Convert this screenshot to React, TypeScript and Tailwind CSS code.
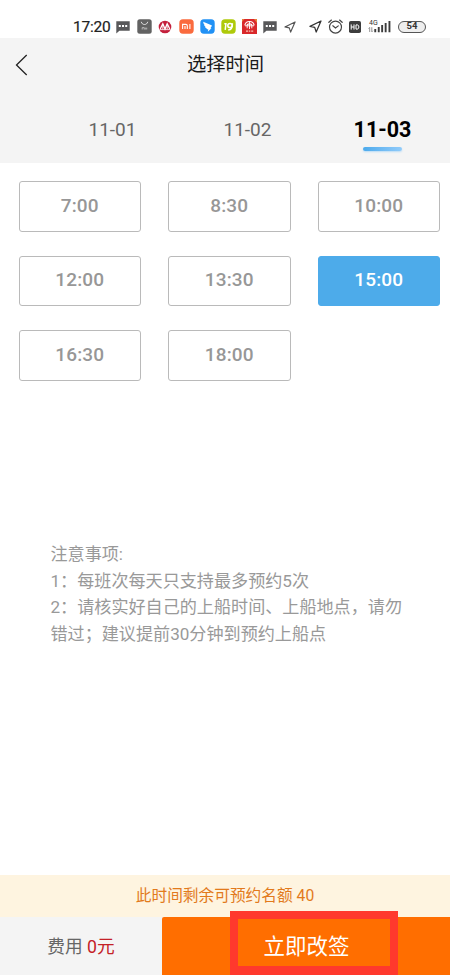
import clsx from "clsx";

const dates = ["11-01", "11-02", "11-03"];
const activeDate = "11-03";

const slots = ["7:00", "8:30", "10:00", "12:00", "13:30", "15:00", "16:30", "18:00"];
const activeSlot = "15:00";

const ChatIcon = () => (
    <svg className="w-[14px] h-[14px]" viewBox="0 0 14 14">
        <path d="M0.3 1.2h13.4v9.6H3.4L0.3 13.400z" fill="#58585a" />
        <path d="M2.800 5h2v2h-2zM6 5h2v2H6zM9.200 5h2v2h-2z" fill="#fff" />
    </svg>
);

const BagIcon = () => (
    <svg className="w-[15px] h-[15px]" viewBox="0 0 15 15">
        <rect x="0.3" y="0.3" width="14.4" height="14.4" rx="2.5" fill="#626262" />
        <path d="M4.300 2.800c.6 3.600 5.800 3.600 6.400 0" fill="none" stroke="#e5e5e5" strokeWidth="1" />
        <path d="M5.200 10.500V8.600h2v1.900M8.300 8.600v1.900M9.700 8.600v1.900" fill="none" stroke="#ccc" strokeWidth="0.8" />
    </svg>
);

const BankIcon = () => (
    <svg className="w-[14px] h-[14px]" viewBox="0 0 14 14">
        <circle cx="7" cy="7" r="6.3" fill="#c4203c" />
        <path d="M2.200 9 4.800 3.800 7 9l2.200-5.200L11.800 9" fill="none" stroke="#fff" strokeWidth="1.3" />
        <path d="M4.800 4v5M9.200 4v5M1.500 9.600h11" fill="none" stroke="#fff" strokeWidth="0.8" />
    </svg>
);

const MiIcon = () => (
    <svg className="w-[15px] h-[15px]" viewBox="0 0 15 15">
        <rect x="0.3" y="0.3" width="14.4" height="14.4" rx="3.6" fill="#fa6b3e" />
        <path d="M3.600 9.900V5.400h3.200c1 0 1.500.5 1.500 1.400v3.100M6 7v2.900M10.900 4.900v5" fill="none" stroke="#fff" strokeWidth="1.100" />
    </svg>
);

const WingIcon = () => (
    <svg className="w-[15px] h-[15px]" viewBox="0 0 15 15">
        <rect x="0.3" y="0.3" width="14.4" height="14.4" rx="3.6" fill="#2191f5" />
        <path d="M3.200 2.800 11.500 6.200c.4.2.5.5.3.9L10.400 9.200h1.100L7.800 12.800l.5-2.600H7.100L6.400 9.300 5.200 8.700l.4-.7-1.500-1.400.5-.6C3.700 5 3.300 4 3.200 2.800z" fill="#fff" />
    </svg>
);

const IqiyiIcon = () => (
    <svg className="w-[15px] h-[15px]" viewBox="0 0 15 15">
        <rect x="0.3" y="0.3" width="14.4" height="14.4" rx="3.6" fill="#afca0b" />
        <path d="M3.300 4.800h1.600L4.200 10.800" fill="none" stroke="#fff" strokeWidth="1.500" />
        <ellipse cx="9" cy="6.500" rx="2.200" ry="2.100" fill="none" stroke="#fff" strokeWidth="1.500" />
        <path d="M11.400 4.200c.2 4-1.200 6.500-4.200 6.700" fill="none" stroke="#fff" strokeWidth="1.500" />
    </svg>
);

const RedAppIcon = () => (
    <svg className="w-[15px] h-[15px]" viewBox="0 0 15 15">
        <path d="M0 0h15v15H0z" fill="#d9282b" />
        <path d="M12 0h3v4zM0 0h2.500L0 3z" fill="#e8803a" />
        <path d="M2.800 6.300C3.400 3.600 5 2.500 7.500 2.500s4.100 1.100 4.700 3.800M5 6.200c.5-1.700 4.500-1.700 5 0" fill="none" stroke="#fff" strokeWidth="1.200" />
        <path d="M7.500 3v7M5.200 6v3.300M9.800 6v3.300M3 6.800h9" stroke="#fff" strokeWidth="0.900" />
        <path d="M4 12.200h2M6.800 12.200h1.500M9.200 12.200h2" stroke="#f8c5b5" strokeWidth="1.300" />
    </svg>
);

const ArrowIcon = ({ className }: { className: string }) => (
    <svg className={className} viewBox="0 0 13 13">
        <path d="M12 1 1 6.400l4.700 1 1.500 4.600z" fill="none" stroke="currentColor" strokeWidth="1.250" strokeLinejoin="round" />
    </svg>
);

const AlarmIcon = () => (
    <svg className="w-[15px] h-[15px]" viewBox="0 0 14 14" fill="none" stroke="#444" strokeLinecap="round">
        <circle cx="7" cy="7.500" r="5.600" strokeWidth="1.100" />
        <path d="M.8 3 3.200 1M13.200 3 10.800 1" strokeWidth="1.200" />
        <path d="M4.500 6.300 7 8.400l2.600-2" strokeWidth="1.100" />
    </svg>
);

const HdIcon = () => (
    <svg className="w-[12px] h-[12px]" viewBox="0 0 12 12">
        <rect width="12" height="12" rx="1.800" fill="#3c3c3c" />
        <path d="M2.200 3.400v5.200M5 3.400v5.200M2.200 6H5M7 3.900v4.200h1c1.300 0 1.800-.7 1.800-2.100S9.300 3.900 8 3.900z" fill="none" stroke="#fff" strokeWidth="1" />
    </svg>
);

const SignalIcon = () => (
    <svg className="w-[24px] h-[16px]" viewBox="0 0 24 16">
        <text x="1" y="6" fontSize="7" fontFamily="Roboto, sans-serif" fill="#333">4G</text>
        <path d="M1.700 13V8.500M.6 9.600l1.100-1.200M3.800 8.200v4.600M4.900 11.700l-1.100 1.200" stroke="#777" strokeWidth="0.800" fill="none" />
        <path d="M6.300 10h1.900v3.300H6.300zM9.800 8h1.900v5.300H9.800zM13.200 6h1.900v7.300h-1.900zM16.700 4h1.900v9.300h-1.900zM20.500 2h1.900v11.300h-1.900z" fill="#3c3c3c" />
    </svg>
);

const StatusBar = () => (
    <div className="flex h-[38px] bg-white pl-[73px] pt-[18px] text-[#555]">
        <span className="w-[43px] text-[15.500px] leading-[18px] tracking-[-0.200px] text-[#222] [-webkit-text-stroke:0.200px_#222]">17:20</span>
        <div className="flex h-[17px] shrink-0 items-center">
            <ChatIcon />
            <div className="ml-[7px]"><BagIcon /></div>
            <div className="ml-[6px]"><BankIcon /></div>
            <div className="ml-[7px]"><MiIcon /></div>
            <div className="ml-[6px]"><WingIcon /></div>
            <div className="ml-[6px]"><IqiyiIcon /></div>
            <div className="ml-[6px]"><RedAppIcon /></div>
            <div className="ml-[6px]"><ChatIcon /></div>
            <ArrowIcon className="ml-[7px] h-[12px] w-[12px]" />
            <ArrowIcon className="ml-[13px] h-[13px] w-[13px] text-[#333]" />
            <div className="ml-[6px]"><AlarmIcon /></div>
            <div className="ml-[6px]"><HdIcon /></div>
            <div className="ml-[7px]"><SignalIcon /></div>
            <div className="ml-[6px] flex h-[12px] w-[28px] items-center justify-center rounded-full border border-[#555] bg-[#eee] text-[9.500px] font-bold text-[#333]">
                54
            </div>
        </div>
    </div>
);

export default function App() {
    return (
        <div className="flex h-[975px] w-[450px] flex-col overflow-hidden bg-white font-['Roboto','Noto_Sans_CJK_SC',sans-serif]">
            <StatusBar />

            <header className="h-[125px] bg-[#f4f4f4]">
                <div className="grid h-[52px] grid-cols-[60px_1fr_60px] items-center">
                    <svg className="ml-[15px] mt-[2px] h-[22px] w-[13px]" viewBox="0 0 13 22" fill="none" stroke="#222" strokeWidth="1.300">
                        <path d="M11.700 1 1.500 11l10.200 10" />
                    </svg>
                    <h1 className="pl-[1px] pt-[2px] text-center text-[19.300px] leading-6 text-[#1a1a1a]">选择时间</h1>
                </div>
                <nav className="grid grid-cols-3 pl-[45px]">
                    {dates.map((date) => (
                        <div key={date} className="flex flex-col items-center pt-[26px]">
                            <span
                                className={clsx(
                                    "h-[28px] leading-[27px]",
                                    date === activeDate ? "text-[21.500px] font-bold text-black" : "text-[19px] text-[#666]"
                                )}
                            >
                                {date}
                            </span>
                            {date === activeDate && (
                                <span className="mt-[3px] h-[3.500px] w-[39px] rounded-sm bg-linear-to-r from-[#4baaec] to-[#90cbfa] shadow-[0_1px_2px_#b9dcf6]" />
                            )}
                        </div>
                    ))}
                </nav>
            </header>

            <main className="flex-1">
                <div className="grid grid-cols-[repeat(3,122.500px)] gap-x-[27px] gap-y-[24px] pl-[18.500px] pt-[18px]">
                    {slots.map((slot) => (
                        <button
                            key={slot}
                            className={clsx(
                                "h-[50.700px] rounded-[3px] border pb-[1px] text-[19px] font-medium tracking-[0.150px]",
                                slot === activeSlot
                                    ? "border-[#4dabea] bg-[#4dabea] text-white"
                                    : "border-[#bababa] bg-white text-[#979797]"
                            )}
                        >
                            {slot}
                        </button>
                    ))}
                </div>

                <div className="mt-[160px] pl-[50.500px] text-[17.100px] leading-[26.700px] text-[#999]">
                    <p>注意事项:</p>
                    <p>1：每班次每天只支持最多预约5次</p>
                    <p>
                        2：请核实好自己的上船时间、上船地点，请勿
                        <br />
                        错过；建议提前30分钟到预约上船点
                    </p>
                </div>
            </main>

            <footer>
                <div className="h-[42px] bg-[#fef4e0] text-center text-[15.700px] leading-[42px] text-[#e27a1c]">
                    此时间剩余可预约名额 40
                </div>
                <div className="flex h-[58px] bg-[#f4f4f4]">
                    <div className="w-[162px] text-center text-[17.700px] leading-[60px] text-[#666]">
                        费用 <span className="text-[#c42127]">0元</span>
                    </div>
                    <button className="relative flex-1 rounded-tl-[2px] bg-[#ff6e00] pl-[1px] pt-[2px] text-[21.500px] text-white">
                        立即改签
                        <span className="absolute -top-[6px] left-[68px] h-[64px] w-[168px] border-8 border-b-[9px] border-[#ff392d]" />
                    </button>
                </div>
            </footer>
        </div>
    );
}
